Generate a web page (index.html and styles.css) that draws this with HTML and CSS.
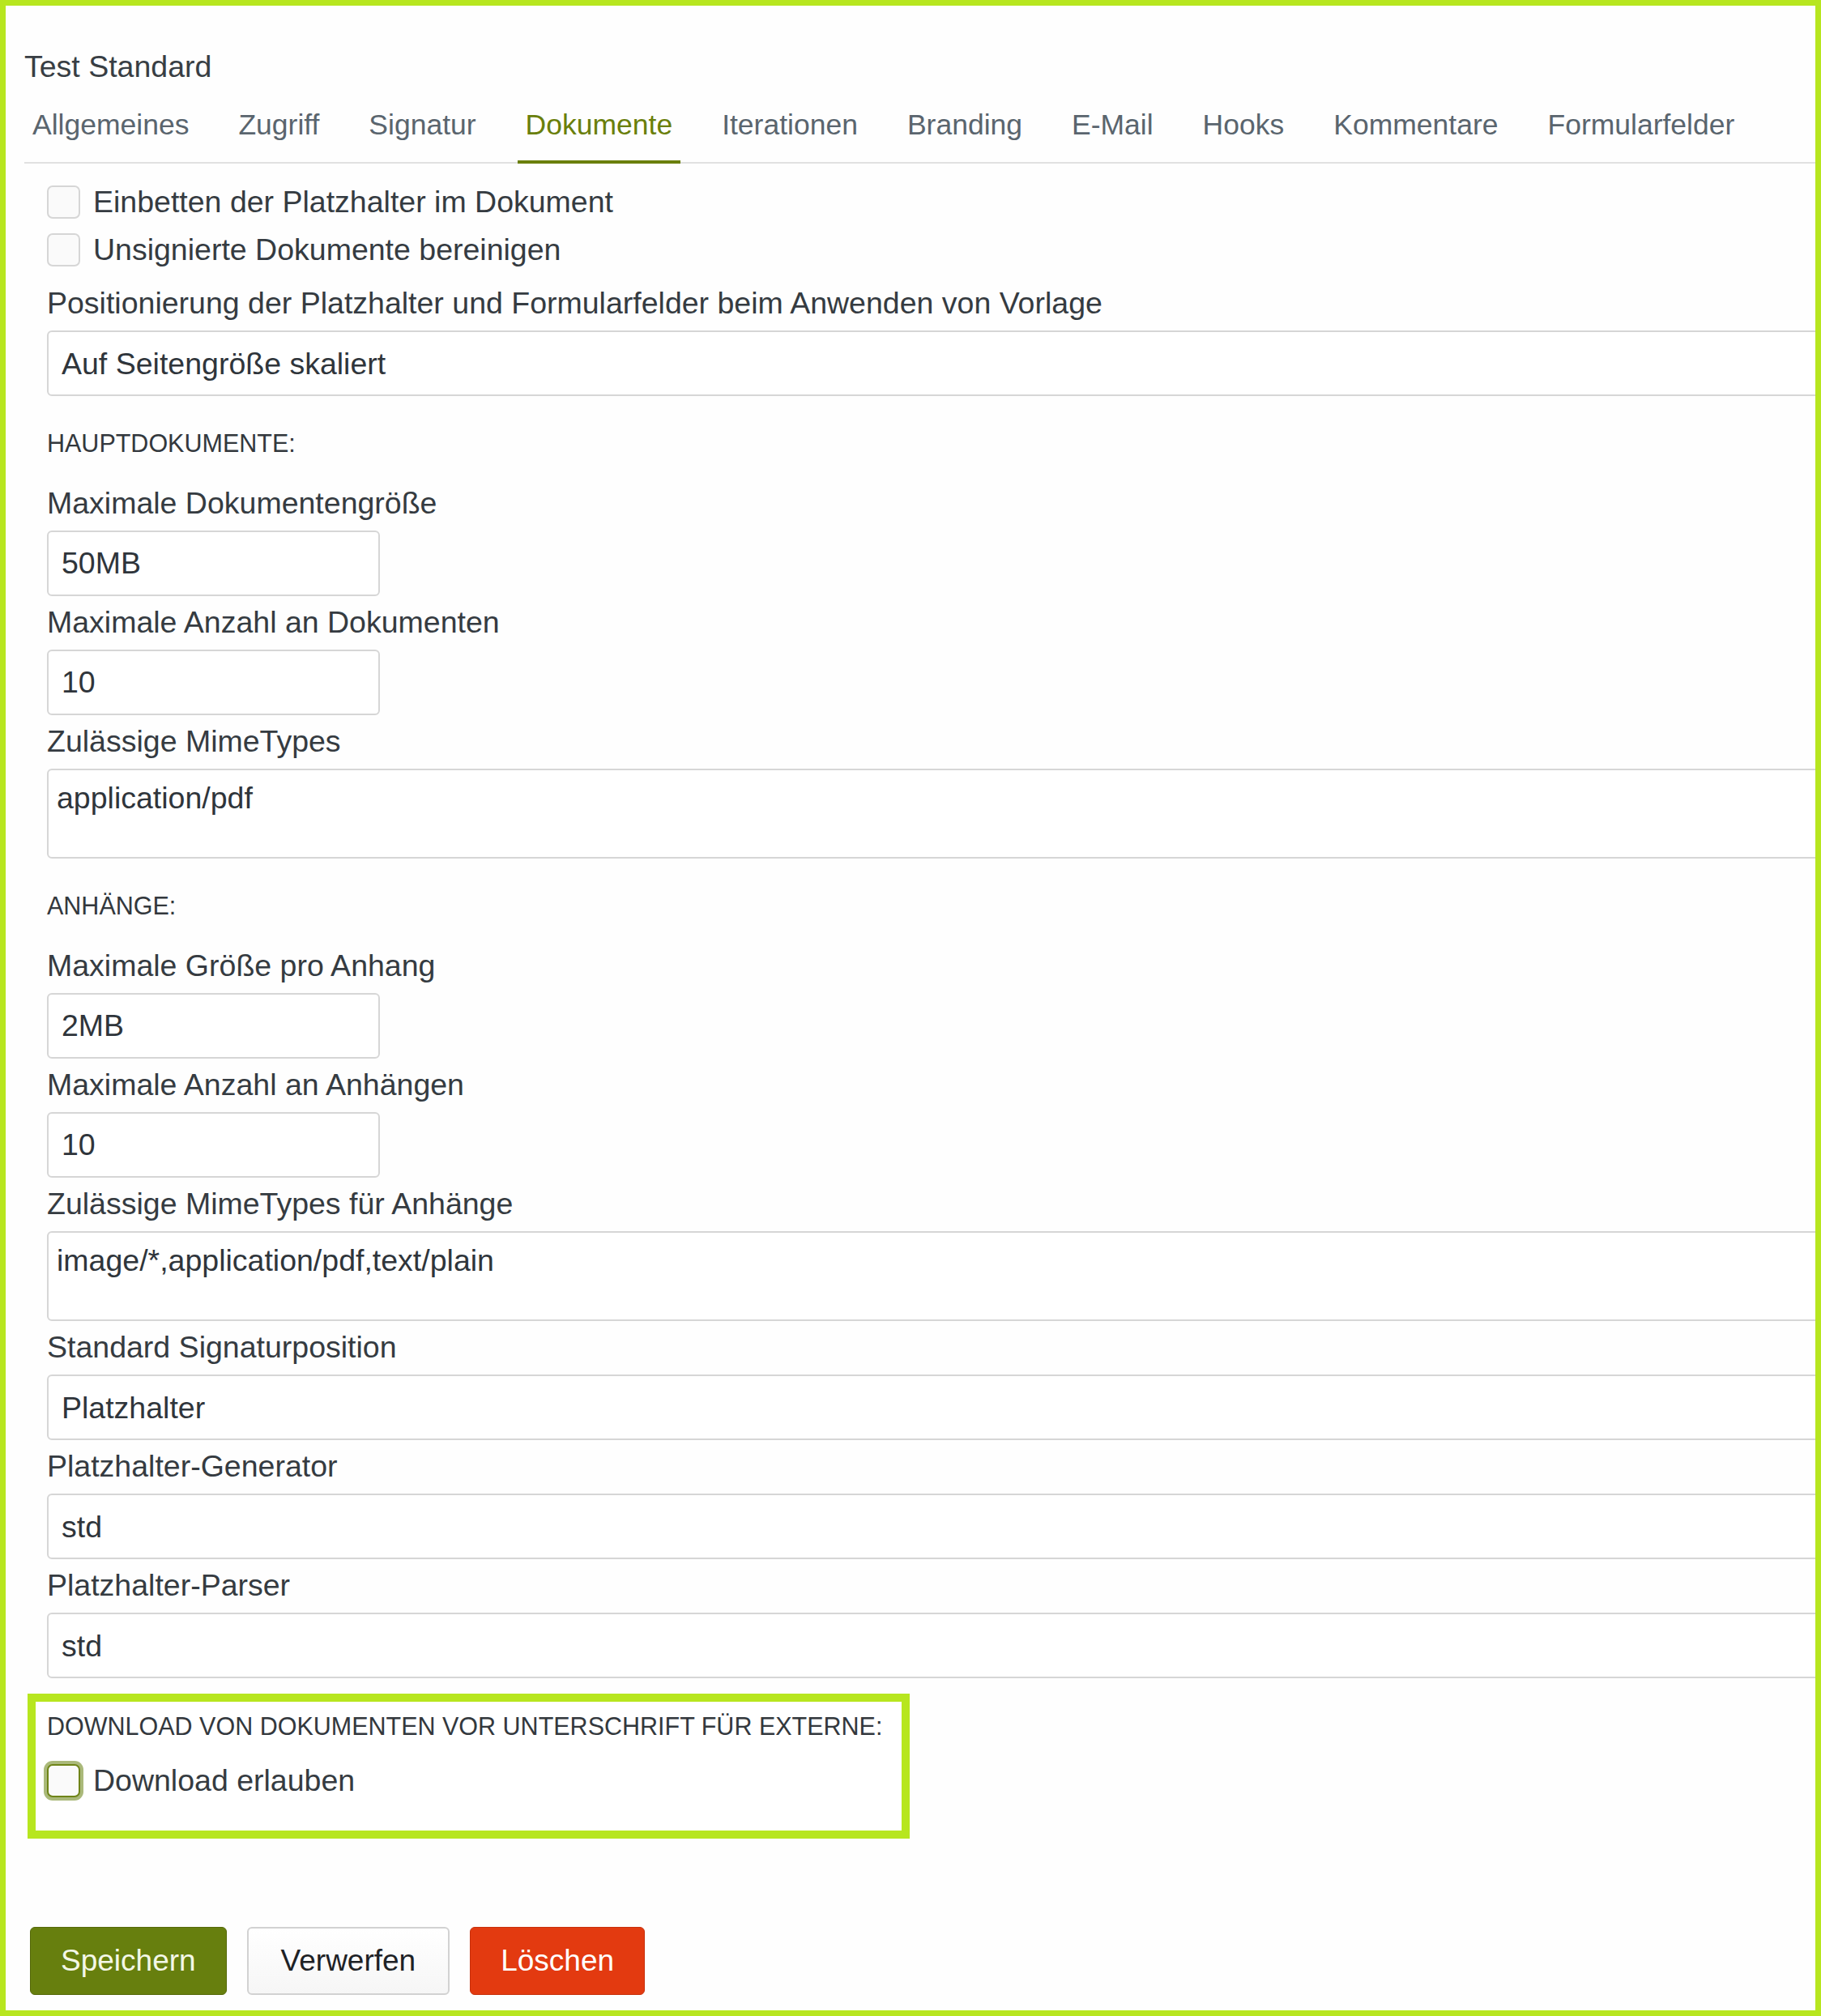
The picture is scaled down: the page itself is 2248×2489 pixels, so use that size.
FILE: index.html
```html
<!DOCTYPE html>
<html lang="de">
<head>
<meta charset="utf-8">
<title>Test Standard – Dokumente</title>
<link rel="stylesheet" href="styles.css">
</head>
<body>
<div class="frame">
  <div class="page">
    <h1 class="title">Test Standard</h1>
    <nav class="tabs">
      <a class="tab">Allgemeines</a>
      <a class="tab">Zugriff</a>
      <a class="tab">Signatur</a>
      <a class="tab active">Dokumente</a>
      <a class="tab">Iterationen</a>
      <a class="tab">Branding</a>
      <a class="tab">E-Mail</a>
      <a class="tab">Hooks</a>
      <a class="tab">Kommentare</a>
      <a class="tab">Formularfelder</a>
    </nav>

    <form class="form">
      <label class="check"><input type="checkbox" class="cb"><span>Einbetten der Platzhalter im Dokument</span></label>
      <label class="check second"><input type="checkbox" class="cb"><span>Unsignierte Dokumente bereinigen</span></label>

      <div class="group first">
        <label class="lbl">Positionierung der Platzhalter und Formularfelder beim Anwenden von Vorlage</label>
        <select class="field wide"><option>Auf Seitengröße skaliert</option></select>
      </div>

      <h2 class="section">Hauptdokumente:</h2>
      <div class="group">
        <label class="lbl">Maximale Dokumentengröße</label>
        <input class="field short" type="text" value="50MB">
      </div>
      <div class="group">
        <label class="lbl">Maximale Anzahl an Dokumenten</label>
        <input class="field short" type="text" value="10">
      </div>
      <div class="group">
        <label class="lbl">Zulässige MimeTypes</label>
        <textarea class="area wide">application/pdf</textarea>
      </div>

      <h2 class="section">Anhänge:</h2>
      <div class="group">
        <label class="lbl">Maximale Größe pro Anhang</label>
        <input class="field short" type="text" value="2MB">
      </div>
      <div class="group">
        <label class="lbl">Maximale Anzahl an Anhängen</label>
        <input class="field short" type="text" value="10">
      </div>
      <div class="group">
        <label class="lbl">Zulässige MimeTypes für Anhänge</label>
        <textarea class="area wide">image/*,application/pdf,text/plain</textarea>
      </div>
      <div class="group">
        <label class="lbl">Standard Signaturposition</label>
        <select class="field wide"><option>Platzhalter</option></select>
      </div>
      <div class="group">
        <label class="lbl">Platzhalter-Generator</label>
        <select class="field wide"><option>std</option></select>
      </div>
      <div class="group">
        <label class="lbl">Platzhalter-Parser</label>
        <select class="field wide"><option>std</option></select>
      </div>

      <section class="highlight">
        <h2 class="section inbox">Download von Dokumenten vor Unterschrift für Externe:</h2>
        <label class="check"><input type="checkbox" class="cb focus"><span>Download erlauben</span></label>
      </section>
    </form>

    <div class="actions">
      <button class="btn save" type="button">Speichern</button>
      <button class="btn discard" type="button">Verwerfen</button>
      <button class="btn delete" type="button">Löschen</button>
    </div>
  </div>
</div>
</body>
</html>
```

FILE: styles.css
```css
html, body {
  margin: 0;
  padding: 0;
  background: #ffffff;
}

body {
  font-family: "Liberation Sans", Arial, sans-serif;
  color: #353b41;
}

.frame {
  box-sizing: border-box;
  height: 2489px;
  border: 7px solid #b7e61f;
  overflow: hidden;
  background: #fefefe;
}

.page {
  padding: 53px 0 0 23px;
}

.title {
  margin: 0;
  font-size: 37.5px;
  line-height: 44px;
  font-weight: normal;
  color: #383e44;
}

/* Tabs */
.tabs {
  display: flex;
  gap: 41px;
  margin-top: 30px;
  border-bottom: 2px solid #e1e1e1;
}

.tab {
  display: block;
  padding: 0 10px 24px;
  margin-bottom: -2px;
  font-size: 35.5px;
  line-height: 40px;
  color: #5a656e;
  border-bottom: 4px solid transparent;
  cursor: pointer;
}

.tab.active {
  color: #6a7f0b;
  border-bottom-color: #6a7f0b;
}

/* Form */
.form {
  padding: 25px 0 0 28px;
}

.check {
  display: flex;
  align-items: center;
  gap: 16px;
  font-size: 37.5px;
  line-height: 44px;
  color: #353b41;
}

.check.second {
  margin-top: 15px;
}

.cb {
  appearance: none;
  -webkit-appearance: none;
  box-sizing: border-box;
  width: 41px;
  height: 41px;
  margin: 0;
  border: 2px solid #d6d6d6;
  border-radius: 7px;
  background: #fafafa;
  flex: none;
}

.cb.focus {
  border-color: #6f8418;
  box-shadow: 0 0 0 4px #aab97a;
}

.group {
  margin-bottom: 10px;
}

.group.first {
  margin-top: 22px;
}

.lbl {
  display: block;
  margin-bottom: 12px;
  font-size: 37.5px;
  line-height: 44px;
  color: #353b41;
}

.field,
.area {
  display: block;
  box-sizing: border-box;
  margin: 0;
  border: 2px solid #d6d6d6;
  border-radius: 6px;
  background: #ffffff;
  font-family: "Liberation Sans", Arial, sans-serif;
  font-size: 37.5px;
  color: #2f353b;
  outline: none;
}

.field {
  height: 81px;
  padding: 0 16px;
  line-height: 44px;
}

select.field {
  appearance: none;
  -webkit-appearance: none;
}

.area {
  height: 111px;
  padding: 12px 10px;
  line-height: 44px;
  resize: none;
}

.wide {
  width: calc(100% + 20px);
}

.short {
  width: 411px;
}

.section {
  margin: 41px 0 35px;
  font-size: 30.5px;
  line-height: 34px;
  font-weight: normal;
  text-transform: uppercase;
  color: #33383d;
}

/* Highlighted box */
.highlight {
  box-sizing: border-box;
  width: 1089px;
  margin: 19px 0 0 -24px;
  padding: 13px 0 40px 14px;
  border: 10px solid #b7e61f;
  background: #ffffff;
}

.section.inbox {
  margin: 0 0 28px;
}

/* Buttons */
.actions {
  display: flex;
  gap: 25px;
  margin-top: 109px;
  padding-left: 7px;
}

.btn {
  box-sizing: border-box;
  height: 84px;
  padding: 0 37px;
  border-radius: 6px;
  font-family: "Liberation Sans", Arial, sans-serif;
  font-size: 37px;
  cursor: pointer;
}

.btn.save {
  background: #677f0e;
  border: 1px solid #55690a;
  color: #f3f7e6;
}

.btn.discard {
  padding: 0 40px;
  background: linear-gradient(#ffffff, #f6f6f6);
  border: 2px solid #d2d2d2;
  color: #1e2226;
}

.btn.delete {
  background: #e33a10;
  border: 1px solid #c7300c;
  color: #ffffff;
}
```
